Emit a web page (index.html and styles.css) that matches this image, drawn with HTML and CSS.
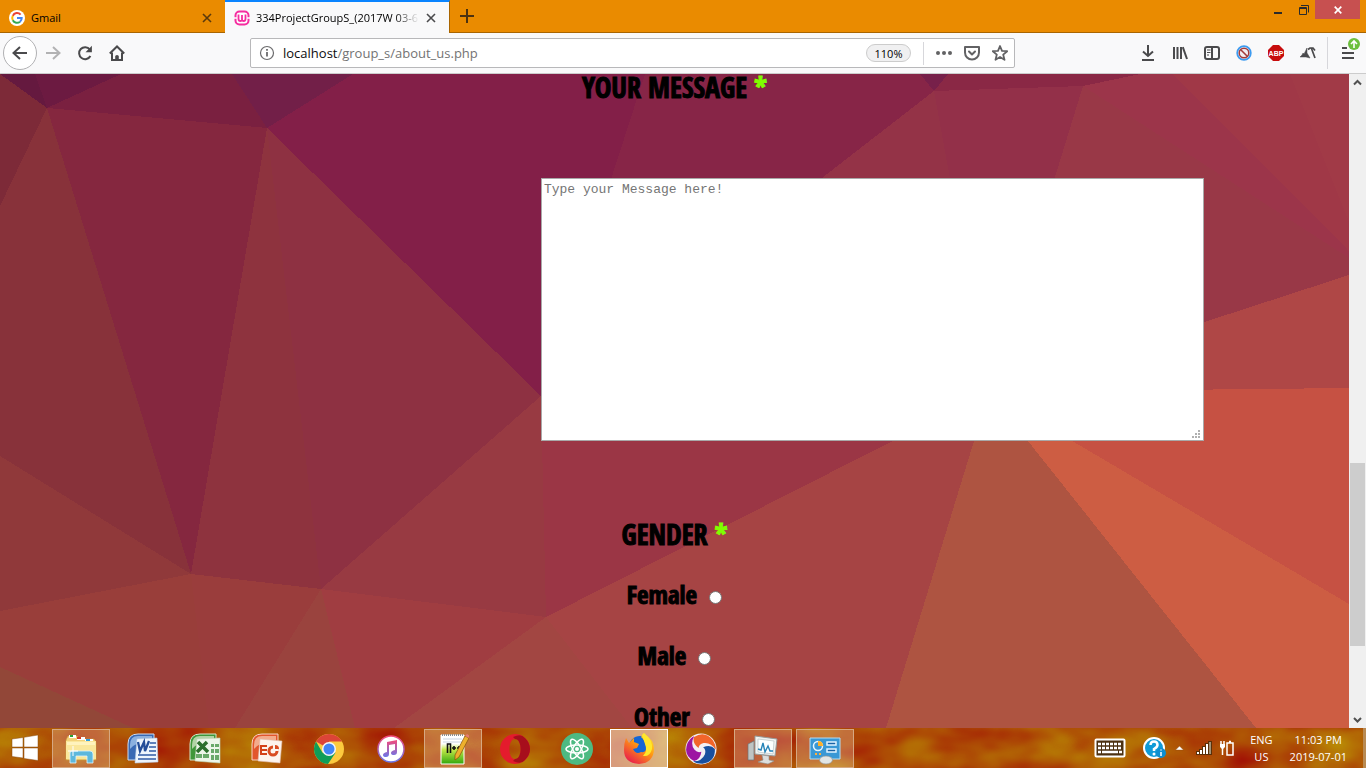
FILE: index.html
```html
<!DOCTYPE html>
<html lang="en">
<head>
<meta charset="utf-8">
<title>334ProjectGroupS</title>
<link rel="stylesheet" href="styles.css">
</head>
<body>
<header class="tabstrip">
  <div class="tab">
    <svg class="favicon" viewBox="0 0 16 16"><circle cx="8" cy="8" r="8" fill="#fff"/><g fill="none" stroke-width="2"><path d="M11.6 4.6A4.7 4.7 0 0 0 3.8 5.8" stroke="#ea4335"/><path d="M3.8 5.8a4.7 4.7 0 0 0 0 4.5" stroke="#fbbc05"/><path d="M3.8 10.3a4.7 4.7 0 0 0 7.2 1.4" stroke="#34a853"/><path d="M11 11.7A4.7 4.7 0 0 0 12.7 8H8" stroke="#4285f4"/></g></svg>
    <span class="tab-title">Gmail</span>
    <button class="tab-close" aria-label="Close tab"><svg viewBox="0 0 12 12"><path d="M2 2l8 8M10 2l-8 8" stroke="#5b3a0c" stroke-width="1.6"/></svg></button>
  </div>
  <div class="tab tab-active">
    <svg class="favicon" viewBox="0 0 16 16"><rect x="1.500" y="1.500" width="13" height="13" rx="4" fill="#fff" stroke="#f52da0" stroke-width="2"/><path d="M0 8h3M13 8h3" stroke="#fff" stroke-width="1.500"/><path d="M4.500 4.500v4.500q0 2 1.800 2T8 9.500V5v4.500q0 1.500 1.700 1.500t1.800-2V4.500" fill="none" stroke="#f52da0" stroke-width="1.800"/></svg>
    <span class="tab-title tab-fade">334ProjectGroupS_(2017W 03-6</span>
    <button class="tab-close" aria-label="Close tab"><svg viewBox="0 0 12 12"><path d="M2 2l8 8M10 2l-8 8" stroke="#4a4a4c" stroke-width="1.600"/></svg></button>
  </div>
  <button class="new-tab" aria-label="New tab"><svg viewBox="0 0 16 16"><path d="M8 1v14M1 8h14" stroke="#4c3210" stroke-width="2"/></svg></button>
  <div class="window-buttons">
    <button aria-label="Minimise"><svg width="10" height="12" viewBox="0 0 10 12"><path d="M1 9h8" stroke="#2b2b2b" stroke-width="2"/></svg></button>
    <button aria-label="Restore"><svg width="10" height="10" viewBox="0 0 10 10" fill="none" stroke="#2b2b2b"><path d="M2 .5h7.500v7"/><path d="M.5 2.500h7v7h-7z"/><path d="M0 3.500h8"/></svg></button>
    <button class="window-close" aria-label="Close"><svg width="8" height="8" viewBox="0 0 8 8"><path d="M.7.7l6.600 6.600M7.300.7L.7 7.300" stroke="#fff" stroke-width="1.700"/></svg></button>
  </div>
</header>

<nav class="toolbar">
  <button class="tool tool-back" aria-label="Back"><svg viewBox="0 0 16 16"><path d="M15 8H1.500M8 2L1.500 8 8 14"/></svg></button>
  <button class="tool tool-off" aria-label="Forward"><svg viewBox="0 0 16 16"><path d="M1 8h13.500M8 2l6.500 6L8 14"/></svg></button>
  <button class="tool" aria-label="Reload"><svg viewBox="0 0 16 16"><path d="M12.800 4.400A6 6 0 1 0 13.400 11"/><path d="M14.900.8v6.400H8.500z" fill="#4a4a4c" stroke="none"/></svg></button>
  <button class="tool" aria-label="Home"><svg viewBox="0 0 16 16"><path d="M.8 8.500L8 1.500l7.200 7"/><path d="M3 7.500V15h10V7.500"/><path d="M6.200 15v-3.500q0-1.500 1.800-1.500t1.800 1.500V15z" fill="#4a4a4c" stroke="none"/></svg></button>
  <div class="urlbar">
    <svg class="info" viewBox="0 0 16 16"><circle cx="8" cy="8" r="6.500" fill="none" stroke="#6b6b6d" stroke-width="1.200"/><path d="M8 7v4.500M8 4v1.800" stroke="#6b6b6d" stroke-width="1.800"/></svg>
    <div class="url"><span class="host">localhost</span>/group_s/about_us.php</div>
    <button class="zoom">110%</button>
    <span class="rule"></span>
    <button class="url-tool" aria-label="Page actions"><svg viewBox="0 0 16 16"><g fill="#626264"><circle cx="2" cy="8" r="2"/><circle cx="8" cy="8" r="2"/><circle cx="14" cy="8" r="2"/></g></svg></button>
    <button class="url-tool" aria-label="Save to Pocket"><svg viewBox="0 0 16 16" fill="none" stroke="#626264" stroke-width="2" stroke-linejoin="round" stroke-linecap="round"><path d="M1 2h14v5.500a7 7 0 0 1-14 0z"/><path d="M5 6.500l3 3 3-3"/></svg></button>
    <button class="url-tool" aria-label="Bookmark"><svg viewBox="0 0 16 16" fill="none" stroke="#626264" stroke-width="1.800" stroke-linejoin="round"><path d="M8 1l2 4.800 5.200.4-4 3.400 1.300 5.200L8 12l-4.500 2.800 1.300-5.200-4-3.400L6 5.800z"/></svg></button>
  </div>
  <button class="tool" aria-label="Downloads"><svg viewBox="0 0 16 16"><path d="M8 0v11M3 6.500L8 11l5-4.500M2 15h12"/></svg></button>
  <button class="tool" aria-label="Library"><svg viewBox="0 0 16 16"><path d="M2 2v12M5.500 2v12M9 2v12M10.800 2.200L15 14"/></svg></button>
  <button class="tool" aria-label="Sidebar"><svg viewBox="0 0 16 16"><rect x="1" y="2" width="14" height="12" rx="2"/><path d="M8 2v12"/><path d="M3 5h3.500M3 7.500h3.500M3 10h2" stroke-width="1"/></svg></button>
  <button class="tool" aria-label="Blocker"><svg viewBox="0 0 16 16"><circle cx="8" cy="8" r="6.800" stroke="#3c9bf0" stroke-width="1.800"/><circle cx="8" cy="8" r="4.800" stroke="#a43b3b" stroke-width="1.500" fill="#f3eef2"/><path d="M4.500 4.500l7 7" stroke="#a43b3b" stroke-width="1.600"/></svg></button>
  <button class="tool" aria-label="Adblock Plus"><svg viewBox="0 0 16 16"><path d="M5 0h6l5 5v6l-5 5H5l-5-5V5z" fill="#c70d0d" stroke="none"/><text class="abp" x="8" y="11">ABP</text></svg></button>
  <button class="tool" aria-label="Developer"><svg viewBox="0 0 16 16"><path d="M0 12l2-2 1-2 1 1 3-6v5l3 5-4-1z" fill="#4a4a4c" stroke="#4a4a4c" stroke-width=".5"/><path d="M8 4.500l2-1.500h3l2 2.500M11.500 3.500l3.500 9.500" stroke-width="1.700"/></svg></button>
  <span class="rule rule-menu"></span>
  <button class="tool tool-menu" aria-label="Menu"><svg viewBox="0 0 16 16"><path d="M2 3h5M2 8h12M2 13h12"/></svg>
    <svg class="badge" viewBox="0 0 12 12"><circle cx="6" cy="6" r="6" fill="#6cbf3c" stroke="none"/><path d="M6 10V3M3 6l3-3 3 3" stroke="#fff" stroke-width="1.600"/></svg></button>
</nav>

<main class="viewport">
  <form class="page">
    <svg class="backdrop" viewBox="0 74 1349 654" preserveAspectRatio="none" aria-hidden="true" shape-rendering="crispEdges">
      <path fill="#a64444" d="M0 74h1349v654H0z"/>
      <path fill="#65193f" d="M0 74h35L47 108z"/><path fill="#6c1a41" d="M35 74h86L47 108z"/>
      <path fill="#7a2040" d="M121 74h111l35 54L47 108z"/><path fill="#721f48" d="M232 74h121l-86 54z"/>
      <path fill="#7d2a38" d="M0 74l47 34L0 206z"/><path fill="#88323a" d="M47 108l144 466L0 456V206z"/>
      <path fill="#85273f" d="M47 108l220 20-76 446z"/><path fill="#8e333e" d="M267 128l54 461-130-15z"/>
      <path fill="#8e3142" d="M267 128l274 268-220 193z"/><path fill="#831f48" d="M353 74h292L541 396 267 128z"/>
      <path fill="#872547" d="M645 74h275l14 17-393 305z"/><path fill="#77204a" d="M920 74h28l-14 17z"/>
      <path fill="#8a2845" d="M948 74h192l-57 12-149 5z"/><path fill="#943347" d="M934 91l55 301-448 4z"/>
      <path fill="#933049" d="M934 91l149-5-94 306z"/><path fill="#993847" d="M1083 86l266 172v17L989 392z"/>
      <path fill="#9c354a" d="M1140 74h33l176 177v7L1083 86z"/><path fill="#a03847" d="M1173 74h117l59 148v29z"/>
      <path fill="#a13a47" d="M1290 74h59v148z"/><path fill="#af4746" d="M989 392l360-117v113z"/>
      <path fill="#c65143" d="M989 392l360-4v216z"/><path fill="#cd5d43" d="M989 392l360 212v124h-93z"/>
      <path fill="#ae5441" d="M989 392l267 336H886z"/><path fill="#9b3645" d="M541 396l448-4-443 225z"/>
      <path fill="#983a42" d="M541 396l5 221-225-28z"/><path fill="#90393a" d="M0 456l191 118L0 611z"/>
      <path fill="#993e3a" d="M0 611l191-37 18 154h-76L0 667z"/><path fill="#924738" d="M0 667l133 61H0z"/>
      <path fill="#9a3d3c" d="M191 574l130 15-86 139h-26z"/><path fill="#9a433e" d="M321 589l34 139H235z"/>
      <path fill="#a03d41" d="M321 589l225 28-152 111h-39z"/><path fill="#a24642" d="M546 617l86 111H394z"/>
    </svg>
    <label class="caption" for="message">YOUR MESSAGE <span class="required">*</span></label>
    <div class="message-box">
      <textarea class="message" id="message" placeholder="Type your Message here!"></textarea>
      <svg class="grip" viewBox="0 0 8 8" aria-hidden="true"><path fill="#b0b0b0" d="M6 0h2v2H6zM3 3h2v2H3zM6 3h2v2H6zM0 6h2v2H0zM3 6h2v2H3zM6 6h2v2H6z"/></svg>
    </div>
    <fieldset class="gender">
      <legend class="caption">GENDER <span class="required">*</span></legend>
      <label class="caption option">Female <input type="radio" name="gender" value="female"></label>
      <label class="caption option">Male <input type="radio" name="gender" value="male"></label>
      <label class="caption option">Other <input type="radio" name="gender" value="other"></label>
    </fieldset>
  </form>
  <div class="scrollbar" aria-hidden="true">
    <svg class="arrow" viewBox="0 0 17 17"><path d="M5 10.500L8.500 7l3.500 3.500"/></svg>
    <div class="track"><div class="thumb"></div></div>
    <svg class="arrow" viewBox="0 0 17 17"><path d="M5 7l3.500 3.500L12 7"/></svg>
  </div>
</main>

<footer class="taskbar">
  <svg class="texture" aria-hidden="true"><defs><filter id="leaves" x="0" y="0" width="100%" height="100%" color-interpolation-filters="sRGB"><feTurbulence type="fractalNoise" baseFrequency=".014 .026" numOctaves="3" seed="4"/><feColorMatrix values=".12 0 0 0 .62  .62 0 0 0 0  0 0 0 0 .02  0 0 0 0 1"/></filter></defs><rect width="100%" height="100%" filter="url(#leaves)"/></svg>
  <button class="start" aria-label="Start"><svg width="28" height="28" viewBox="0 0 28 28"><path fill="#fff" stroke="#8a4a10" stroke-width=".5" d="M1 5l11-1.500V13H1zM13 3.300L27 1v12H13zM1 14h11v10L1 22.500zM13 14h14v12.500l-14-2z"/></svg></button>
  <div class="apps">
    <button class="app app-open" aria-label="File Explorer"><svg viewBox="0 0 32 32"><path fill="#f3d27a" stroke="#c79a3a" stroke-width=".6" d="M1 7l2-4h9l2 3h15l2 3v18H1z"/><path fill="#fff" d="M4 2h7v3H4zM12 4h8v3h-8zM20 6h8v3h-8z"/><path fill="#2aa336" d="M5 2h3v2H5z"/><path fill="#d33b24" d="M12 4h4v2h-4z"/><path fill="#2e9de0" d="M21 6h4v2h-4z"/><path fill="#fae79b" d="M1 8h30v18H1z"/><path fill="#fff3bd" d="M2 9h28v3H2z"/><path fill="#5eb8dc" stroke="#dff5ff" stroke-width=".8" d="M5 30V20q0-2 2-2h18q3 0 3 3v9h-6v-7H11v7z"/><path stroke="#fff" d="M8 13v10M3 18h10"/></svg></button>
    <button class="app" aria-label="Word"><svg viewBox="0 0 32 32"><path fill="#3969b4" stroke="#cbdcf2" d="M1 27V11Q1 1 11 1h16v26z"/><path fill="#8bb0df" d="M3 12q0-9 8-9h14v5q-14-1-22 8z"/><path fill="#eef5fd" stroke="#b8cbe3" stroke-width=".6" d="M10 6l20-1 1 24-23 1z"/><path fill="none" stroke="#244d98" stroke-width="2.300" d="M11 9l2 9 4-9 1 9 4-10"/><path stroke="#315ba5" stroke-width="1.600" d="M23 10h6M22 14h7M22 18h7M11 22h18M11 26h18"/></svg></button>
    <button class="app" aria-label="Excel"><svg viewBox="0 0 32 32"><path fill="#3f9739" stroke="#d1e7cb" d="M1 27V11Q1 1 11 1h16v26z"/><path fill="#b1d4a5" d="M3 12q0-9 8-9h14v5q-14-1-22 8z"/><path fill="#edf6e9" stroke="#bdd3b6" stroke-width=".6" d="M8 6l23-1v25L6 28z"/><path stroke="#2c6f2c" stroke-width="3.500" d="M9 9l10 10M18 9L8 19"/><path fill="#69a969" d="M22 11h3v3h-3zM26 11h4v3h-4zM22 16h3v4h-3zM26 16h4v4h-4zM7 21h6v4H7zM14 21h6v4h-6zM22 22h3v5h-3zM26 22h4v5h-4z"/></svg></button>
    <button class="app" aria-label="PowerPoint"><svg viewBox="0 0 32 32"><path fill="#e2562c" stroke="#f7d1c3" d="M1 27V11Q1 1 11 1h16v26z"/><path fill="#f3ab8c" d="M3 12q0-9 8-9h14v5q-14-1-22 8z"/><path fill="#fdf3ed" stroke="#ddb9a6" stroke-width=".6" d="M9 6l22 2-2 22-22-2z"/><path fill="none" stroke="#d34119" stroke-width="2" d="M16 13H10v8h6M10 17h6"/><circle cx="22" cy="18" r="4" fill="none" stroke="#d94b20" stroke-width="3"/><path fill="#fdf3ed" d="M22 18v-6l3 0 3 6z"/><path fill="#d94b20" d="M24 16v-4q4 0 4 4z"/></svg></button>
    <button class="app" aria-label="Chrome"><svg viewBox="0 0 32 32"><circle cx="16" cy="16" r="15" fill="#fcca3e"/><path fill="#dc4437" d="M16 16L3 8.500A15 15 0 0 1 29 8.500H16z"/><path fill="#109d58" d="M16 16L9.500 19.700 3 8.500A15 15 0 0 0 15 31l7.500-11.300z"/><circle cx="16" cy="16" r="7" fill="#f5f5f5"/><circle cx="16" cy="16" r="5.500" fill="#4285f4"/></svg></button>
    <button class="app" aria-label="iTunes"><svg viewBox="0 0 32 32"><defs><linearGradient id="note" x1="0" y1="0" x2="0" y2="1"><stop stop-color="#f3497b"/><stop offset="1" stop-color="#6c76e8"/></linearGradient></defs><circle cx="16" cy="16" r="13" fill="#fff" stroke="url(#note)" stroke-width="1.500"/><path fill="url(#note)" d="M12 9l10-2v12q0 3-3 3t-3-2q0-2 4-3v-6l-6 1v9q0 3-3 3t-3-2q0-2 4-3z"/></svg></button>
    <button class="app app-open" aria-label="Notepad++"><svg viewBox="0 0 32 32"><defs><linearGradient id="lime" x1="0" y1="0" x2="0" y2="1"><stop offset=".3" stop-color="#fff"/><stop offset=".5" stop-color="#c5e84a"/><stop offset="1" stop-color="#2fa70c"/></linearGradient></defs><path fill="url(#lime)" stroke="#fff" d="M4 2h23v29H4z"/><path stroke="#8c8c8c" stroke-width="2" stroke-dasharray="1 1" d="M5 2h21"/><path stroke="#c9d4e0" d="M6 6h19M6 9h19"/><path fill="none" stroke="#111" stroke-width="1.600" d="M10.500 20v-9h3v9M15 15h4M17 13v4M20 15h4M22 13v4"/><path fill="#edb02d" stroke="#87520b" stroke-width=".7" d="M28 3l4 2-10 19-4 3v-5z"/><path fill="#e57b72" d="M28 3l2-2 3 2-1 2z"/></svg></button>
    <button class="app" aria-label="Opera"><svg viewBox="0 0 32 32"><path fill="#e41b2d" fill-rule="evenodd" d="M16 1a15 15 0 1 0 0 30 15 15 0 0 0 0-30zm0 5c-7.500 0-7.500 20 0 20s7.500-20 0-20z"/><path fill="#a70e1c" d="M14 4q8-4 12 1 5 5 5 11t-5 11q-4 5-12 1l2-2c7.500 0 7.500-20 0-20z"/></svg></button>
    <button class="app" aria-label="Atom"><svg viewBox="0 0 32 32"><circle cx="16" cy="16" r="16" fill="#4dba82"/><g fill="none" stroke="#fff" stroke-width="1.500"><ellipse cx="16" cy="16" rx="4" ry="11" transform="rotate(-30 16 16)"/><ellipse cx="16" cy="16" rx="4" ry="11" transform="rotate(30 16 16)"/><ellipse cx="16" cy="16" rx="4" ry="11" transform="rotate(90 16 16)"/></g><circle cx="16" cy="16" r="2" fill="#fff"/></svg></button>
    <button class="app app-open app-current" aria-label="Firefox"><svg viewBox="0 0 32 32"><defs><linearGradient id="fire" x1=".9" y1="0" x2=".2" y2="1"><stop stop-color="#fff12c"/><stop offset=".45" stop-color="#ff9a12"/><stop offset="1" stop-color="#e8164f"/></linearGradient></defs><circle cx="17" cy="14" r="11" fill="#1566d5"/><path fill="url(#fire)" d="M3 5l3 5 5-5v4l5 2-2 4-4 1q3 6 8 3 6 1 5-6-1-6-5-9l3-4 2 3q7 3 8 12 0 15-15 16Q1 30 1 17 1 10 3 5z"/><path fill="#ffe72b" d="M19 2l2-2q9 7 8 16-2 8-9 7 5-5 2-12z"/></svg></button>
    <button class="app" aria-label="Browser"><svg viewBox="0 0 32 32"><circle cx="16" cy="16" r="15.500" fill="#f3eef3"/><path fill="#f2652a" d="M9 4Q20-3 28 7.500q3.500 6 2.500 9Q26 9 18.500 10 14 11 13.500 15 7 10 9 4z"/><path fill="#194f9e" transform="rotate(120 16 16)" d="M9 4Q20-3 28 7.500q3.500 6 2.500 9Q26 9 18.500 10 14 11 13.500 15 7 10 9 4z"/><path fill="#9d16a2" transform="rotate(240 16 16)" d="M9 4Q20-3 28 7.500q3.500 6 2.500 9Q26 9 18.500 10 14 11 13.500 15 7 10 9 4z"/></svg></button>
    <button class="app app-open" aria-label="Performance Monitor"><svg viewBox="0 0 32 32"><path fill="#bfc4c3" stroke="#6d7474" stroke-width=".7" d="M1 11l6-3v19H1z"/><path fill="#eff2f1" stroke="#969c9a" d="M8 3l22 3-2 17-20-2z"/><path fill="#fcffff" stroke="#b8c3c4" stroke-width=".7" d="M11 6l16 2-1 13-15-2z"/><path fill="none" stroke="#2584b8" stroke-width="1.400" d="M11 16l3 1 2-7 2 9 3-6 2 5h3"/><path fill="#dcdedd" stroke="#8b918f" stroke-width=".6" d="M15 22l7 1v4l5 1-6 3-10-2 5-2z"/></svg></button>
    <button class="app app-open" aria-label="Control Panel"><svg viewBox="0 0 32 32"><path fill="#3998d5" stroke="#b2ddf4" d="M1 5h30v21H1z"/><circle cx="9" cy="13" r="4.500" fill="none" stroke="#e6f6ff" stroke-width="1.500"/><path fill="#ffb02a" d="M9 13V8q5 0 5 5z"/><path fill="#1963a6" stroke="#dff3ff" stroke-width="1.500" d="M18 9h9v3h-9zM18 16h9v3h-9z"/><path stroke="#ffb13c" stroke-width="2" d="M6 21h2M10 21h2"/><ellipse cx="17" cy="27" rx="6.500" ry="4" fill="#e1e5e5" stroke="#929796" stroke-width=".7"/></svg></button>
  </div>
  <div class="tray">
    <svg width="32" height="20" viewBox="0 0 32 20"><rect x="1.500" y="1.500" width="29" height="17" rx="1" fill="#4c3110" stroke="#fff" stroke-width="2"/><path stroke="#fff" stroke-width="2.500" stroke-dasharray="3 1" d="M4 6h24M4 10h24M4 14h3M25 14h3"/><path stroke="#fff" stroke-width="2.500" d="M8 14h16"/></svg>
    <svg class="help" width="26" height="24" viewBox="0 0 26 24"><circle cx="12" cy="12" r="10" fill="#109bd7" stroke="#fff" stroke-width="2"/><path fill="none" stroke="#fff" stroke-width="2.500" d="M8.500 9q0-3.500 3.500-3.500T15.500 9q0 2-3.500 4v2"/><circle cx="12" cy="18" r="1.500" fill="#fff"/><circle cx="19" cy="17" r="5" fill="#0d8fd0"/><path stroke="#fff" stroke-width="1.500" d="M19 16v4M19 13.500v1"/></svg>
    <svg width="9" height="6" viewBox="0 0 9 6"><path fill="#fff" stroke="#8c4a12" stroke-width=".4" d="M.5 5l4-4 4 4z"/></svg>
    <svg class="signal" width="16" height="14" viewBox="0 0 16 14"><path fill="#5a3008" d="M0 10h3V8h3V5h3V2h3v-2h4v14H0z"/><path fill="#fff" d="M1 11h2v2H1zM4 9h2v4H4zM7 6h2v7H7zM10 3h2v10h-2z"/><path fill="#a19175" d="M13 1h2v12h-2z"/></svg>
    <svg width="16" height="16" viewBox="0 0 16 16"><path fill="none" stroke="#fff" stroke-width="1.500" d="M2 1v4M5 1v4M3.500 8v7M8 3h6v12H8zM10 1.500h2"/><path fill="#fff" d="M1 4h5v3L4 9H3L1 7z"/></svg>
    <div class="tray-text lang">ENG<br>US</div>
    <div class="tray-text clock">11:03 PM<br>2019-07-01</div>
  </div>
</footer>
</body>
</html>
```

FILE: styles.css
```css
* { box-sizing: border-box; }

body {
  margin: 0;
  height: 100vh;
  display: flex;
  flex-direction: column;
  overflow: hidden;
  font-family: "Open Sans", "Noto Sans", sans-serif;
  font-size: 11px;
}

button {
  border: 0;
  padding: 0;
  background: none;
  font: inherit;
  color: inherit;
  display: flex;
  align-items: center;
  justify-content: center;
}

svg { flex: none; }

/* Tabs */
.tabstrip {
  display: flex;
  flex: none;
  height: 33px;
  background: #ea8b00;
  box-shadow: inset 0 -1px #a96500;
}

.tab {
  display: flex;
  align-items: center;
  width: 225px;
  padding: 2px 12px 0 9px;
  gap: 6px;
}

.tab-active {
  background: #f9f9fa;
  border-top: 2px solid #0a84ff;
  border-right: 1px solid #a96500;
  padding-top: 0;
}

.favicon { width: 16px; height: 16px; }

.tab-title {
  flex: 1;
  overflow: hidden;
  white-space: nowrap;
}

.tab-fade {
  -webkit-mask-image: linear-gradient(to left, transparent, #000 24px);
  mask-image: linear-gradient(to left, transparent, #000 24px);
}

.tab-close svg { width: 12px; height: 12px; }

.new-tab { width: 33px; height: 32px; }
.new-tab svg { width: 16px; height: 16px; }

.window-buttons {
  display: flex;
  margin-left: auto;
  margin-right: 6px;
  height: 19px;
}

.window-buttons button { width: 26px; padding-left: 4px; }
.window-buttons .window-close { width: 45px; padding: 0; background: #c75050; }

/* Toolbar */
.toolbar {
  display: flex;
  align-items: center;
  flex: none;
  height: 41px;
  padding: 0 2px 0 3px;
  background: #f9f9fa;
  border-bottom: 1px solid #ccc;
}

.tool { width: 32px; height: 32px; position: relative; }

.tool > svg {
  width: 16px;
  height: 16px;
  fill: none;
  stroke: #4a4a4c;
  stroke-width: 2;
}

.tool-back {
  width: 34px;
  height: 34px;
  border: 1px solid #b1b1b3;
  border-radius: 50%;
  background: #fff;
}

.tool-off { opacity: 0.4; }

.abp {
  font-family: "Liberation Sans", sans-serif;
  font-size: 7px;
  font-weight: bold;
  text-anchor: middle;
  fill: #fff;
  stroke: none;
}

.tool > .badge {
  position: absolute;
  top: 1px;
  right: 4px;
  width: 12px;
  height: 12px;
}

.urlbar {
  flex: 1;
  display: flex;
  align-items: center;
  height: 30px;
  margin: 0 117px;
  padding: 0 0 0 8px;
  background: #fff;
  border: 1px solid #b8b8ba;
  border-radius: 2px;
}

.info { width: 16px; height: 16px; margin-right: 8px; }

.url { flex: 1; font-size: 13px; color: #737373; }
.host { color: #0c0c0d; }

.zoom {
  width: 45px;
  height: 18px;
  border: 1px solid #ccc;
  border-radius: 9px;
  background: #f0f0f1;
  font-size: 11px;
}

.rule { width: 1px; height: 23px; margin: 0 6px 0 12px; background: #d7d7db; }
.rule-menu { height: 32px; margin: 0 4px 0 3px; }

.url-tool { width: 28px; height: 28px; }
.url-tool svg { width: 16px; height: 16px; }

/* Web page */
.viewport { flex: 1; display: flex; min-height: 0; }

.page {
  flex: 1;
  min-width: 0;
  position: relative;
  display: flex;
  flex-direction: column;
}

.backdrop {
  position: absolute;
  inset: 0;
  width: 100%;
  height: 100%;
  z-index: -1;
}

.caption {
  display: block;
  width: 100%;
  flex: none;
  padding: 0;
  line-height: 26px;
  text-align: center;
  font-family: "Open Sans Condensed", "Liberation Sans Narrow", "DejaVu Sans Condensed", sans-serif;
  font-size: 28px;
  font-weight: bold;
  -webkit-text-stroke: 1px;
  color: #000;
}

.option { font-size: 25px; }

.required { color: #7fff00; }

.message-box {
  position: relative;
  flex: none;
  width: 49.15%;
  height: 263px;
  margin: 78px 0 80px 40.1%;
}

.message {
  display: block;
  width: 100%;
  height: 100%;
  padding: 2px;
  border: 1px solid #a9a9a9;
  border-radius: 0;
  background: #fff;
  resize: none;
  font-family: "Liberation Mono", monospace;
  font-size: 13px;
  line-height: 18px;
}

.message::placeholder { color: #757575; }

.grip { position: absolute; right: 4px; bottom: 3px; width: 8px; height: 8px; }

.gender {
  display: flex;
  flex: none;
  flex-direction: column;
  gap: 35px;
  margin: 0;
  padding: 0;
  border: 0;
}

.gender legend { margin-bottom: 34px; }

.option input {
  appearance: none;
  width: 13px;
  height: 13px;
  margin: 0 0 0 6px;
  border: 1px solid #777;
  border-radius: 50%;
  background: #fff;
}

.scrollbar {
  flex: none;
  display: flex;
  flex-direction: column;
  width: 17px;
  background: #f0f0f0;
}

.arrow { width: 17px; height: 17px; fill: none; stroke: #505050; stroke-width: 2; }

.track { flex: 1; padding: 0 1px; }
.track::before { content: ""; display: block; height: 60%; }
.thumb { height: 29.5%; background: #cdcdcd; }

/* Taskbar */
.taskbar {
  flex: none;
  position: relative;
  z-index: 1;
  display: flex;
  align-items: stretch;
  height: 40px;
  background: #b05408;
  color: #fff;
}

.texture {
  position: absolute;
  inset: 0;
  width: 100%;
  height: 100%;
  z-index: -1;
}

.start { width: 50px; }

.apps { display: flex; gap: 4px; padding-left: 2px; }

.app { width: 58px; margin-top: 1px; border: 1px solid transparent; }
.app svg { width: 32px; height: 32px; }
.app-open { border-color: #d6a882; background: rgba(255, 226, 196, 0.28); }
.app-current { border-color: #fff; background: rgba(255, 238, 222, 0.55); }

.tray {
  display: flex;
  align-items: center;
  gap: 7px;
  margin-left: auto;
  padding-right: 16px;
  border-right: 3px solid #b98a52;
}

.help { margin-left: 9px; }
.signal { margin-left: 5px; }

.tray-text { text-align: center; font-size: 11px; line-height: 17px; }
.lang { margin-left: 8px; }
.clock { margin-left: 10px; }
```
